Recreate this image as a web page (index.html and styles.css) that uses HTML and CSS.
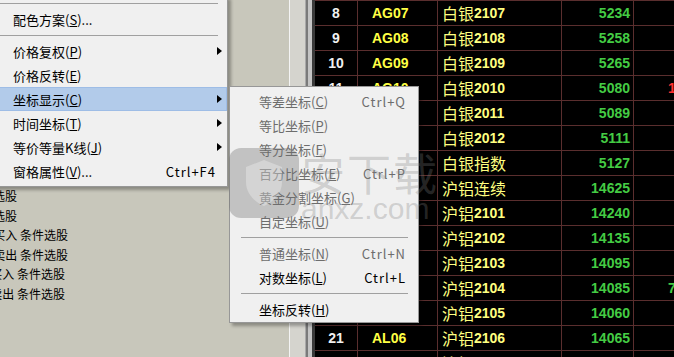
FILE: index.html
```html
<!DOCTYPE html>
<html lang="zh-CN">
<head>
<meta charset="utf-8">
<title>坐标显示</title>
<link rel="stylesheet" href="styles.css">
</head>
<body>
<div class="screen">
  <div class="left-pane">
    <div class="tree">
      <div class="tline w17"><span>指标选股</span></div>
      <div class="tline w17"><span>智能选股</span></div>
      <div class="tline w68"><span>指标买入 条件选股</span></div>
      <div class="tline w68"><span>指标卖出 条件选股</span></div>
      <div class="tline w65"><span>趋势买入 条件选股</span></div>
      <div class="tline w65"><span>趋势卖出 条件选股</span></div>
    </div>
  </div>
  <div class="vbar"></div>
  <div class="vedge"></div>
  <div class="quote">
    <div class="row"><div class="c num">8</div><div class="c code">AG07</div><div class="c name"><span class="cn">白银</span>2107</div><div class="c price">5234</div><div class="c extra"></div></div>
    <div class="row"><div class="c num">9</div><div class="c code">AG08</div><div class="c name"><span class="cn">白银</span>2108</div><div class="c price">5258</div><div class="c extra"></div></div>
    <div class="row"><div class="c num">10</div><div class="c code">AG09</div><div class="c name"><span class="cn">白银</span>2109</div><div class="c price">5265</div><div class="c extra"></div></div>
    <div class="row"><div class="c num">11</div><div class="c code">AG10</div><div class="c name"><span class="cn">白银</span>2010</div><div class="c price">5080</div><div class="c extra up">15</div></div>
    <div class="row"><div class="c num"></div><div class="c code"></div><div class="c name"><span class="cn">白银</span>2011</div><div class="c price">5089</div><div class="c extra"></div></div>
    <div class="row"><div class="c num"></div><div class="c code"></div><div class="c name"><span class="cn">白银</span>2012</div><div class="c price">5111</div><div class="c extra"></div></div>
    <div class="row"><div class="c num"></div><div class="c code"></div><div class="c name"><span class="cn">白银指数</span></div><div class="c price">5127</div><div class="c extra"></div></div>
    <div class="row"><div class="c num"></div><div class="c code"></div><div class="c name"><span class="cn">沪铝连续</span></div><div class="c price">14625</div><div class="c extra"></div></div>
    <div class="row"><div class="c num"></div><div class="c code"></div><div class="c name"><span class="cn">沪铝</span>2101</div><div class="c price">14240</div><div class="c extra"></div></div>
    <div class="row"><div class="c num"></div><div class="c code"></div><div class="c name"><span class="cn">沪铝</span>2102</div><div class="c price">14135</div><div class="c extra"></div></div>
    <div class="row"><div class="c num"></div><div class="c code"></div><div class="c name"><span class="cn">沪铝</span>2103</div><div class="c price">14095</div><div class="c extra"></div></div>
    <div class="row"><div class="c num"></div><div class="c code"></div><div class="c name"><span class="cn">沪铝</span>2104</div><div class="c price">14085</div><div class="c extra dn">7</div></div>
    <div class="row"><div class="c num"></div><div class="c code"></div><div class="c name"><span class="cn">沪铝</span>2105</div><div class="c price">14060</div><div class="c extra"></div></div>
    <div class="row"><div class="c num">21</div><div class="c code">AL06</div><div class="c name"><span class="cn">沪铝</span>2106</div><div class="c price">14065</div><div class="c extra"></div></div>
    <div class="row"><div class="c num">22</div><div class="c code">AL07</div><div class="c name"><span class="cn">沪铝</span>2107</div><div class="c price">14070</div><div class="c extra"></div></div>
  </div>

  <div class="menu main-menu">
    <div class="sep"></div>
    <div class="item"><span class="label">配色方案(<u>S</u>)...</span></div>
    <div class="sep"></div>
    <div class="item"><span class="label">价格复权(<u>P</u>)</span><span class="arrow"></span></div>
    <div class="item"><span class="label">价格反转(<u>E</u>)</span></div>
    <div class="item active"><span class="label">坐标显示(<u>C</u>)</span><span class="arrow"></span></div>
    <div class="item"><span class="label">时间坐标(<u>T</u>)</span><span class="arrow"></span></div>
    <div class="item"><span class="label">等价等量K线(<u>J</u>)</span><span class="arrow"></span></div>
    <div class="item"><span class="label">窗格属性(<u>V</u>)...</span><span class="key">Ctrl+F4</span></div>
  </div>

  <div class="menu sub-menu">
    <div class="item dis"><span class="label">等差坐标(<u>C</u>)</span><span class="key">Ctrl+Q</span></div>
    <div class="item dis"><span class="label">等比坐标(<u>P</u>)</span></div>
    <div class="item dis"><span class="label">等分坐标(<u>F</u>)</span></div>
    <div class="item dis"><span class="label">百分比坐标(<u>E</u>)</span><span class="key">Ctrl+P</span></div>
    <div class="item dis"><span class="label">黄金分割坐标(<u>G</u>)</span></div>
    <div class="item dis"><span class="label">自定坐标(<u>U</u>)</span></div>
    <div class="sep"></div>
    <div class="item dis"><span class="label">普通坐标(<u>N</u>)</span><span class="key">Ctrl+N</span></div>
    <div class="item"><span class="label">对数坐标(<u>L</u>)</span><span class="key">Ctrl+L</span></div>
    <div class="sep"></div>
    <div class="item"><span class="label">坐标反转(<u>H</u>)</span></div>
  </div>

  <div class="watermark">
    <div class="wm-logo">
      <svg width="44" height="50" viewBox="0 0 44 50"><path d="M22 2 L40 9 V24 C40 36 31 44 22 48 C13 44 4 36 4 24 V9 Z" fill="rgba(255,255,255,0.3)"/></svg>
    </div>
    <div class="wm-text">
      <div class="wm-cn">安下载</div>
      <div class="wm-en">anxz.com</div>
    </div>
  </div>
</div>
</body>
</html>
```

FILE: styles.css
```css
* { box-sizing: border-box; }
html, body { margin: 0; padding: 0; }
body {
  width: 674px;
  height: 357px;
  overflow: hidden;
  background: #000;
  font-family: "Noto Sans CJK SC", sans-serif;
}
.screen {
  position: relative;
  width: 674px;
  height: 357px;
  display: flex;
  overflow: hidden;
}

/* left panel */
.left-pane {
  width: 289px;
  flex: none;
  background: #c8c7bb;
  padding-top: 186px;
  font-size: 12px;
  color: #000;
}
.tline {
  height: 19.6px;
  line-height: 19.6px;
  display: flex;
  justify-content: flex-end;
  overflow: hidden;
  white-space: nowrap;
}
.w17 { width: 17px; }
.w68 { width: 68px; }
.w65 { width: 65px; }

.vbar {
  width: 16px;
  flex: none;
  background: #d5d4ce;
  border-left: 1px solid #f4f4f4;
}
.vedge {
  width: 10px;
  flex: none;
  background: linear-gradient(to right, #a9a9a9 0 1px, #7a7a7a 1px 3px, #c4c4c4 3px 7px, #3a3a3a 7px 10px);
}

/* quote table */
.quote {
  flex: 1;
  background: #000;
  border-top: 1px solid #5a2e2e;
}
.row {
  display: grid;
  grid-template-columns: 43px 80px 124px 72px 1fr;
  height: 25px;
  border-bottom: 1px solid #5a2e2e;
}
.c {
  border-right: 1px solid #5a2e2e;
  display: flex;
  align-items: center;
  font-family: "Liberation Sans", sans-serif;
  font-weight: bold;
  font-size: 14px;
  white-space: nowrap;
  overflow: hidden;
}
.num { justify-content: center; color: #f0f0f0; }
.code { padding-left: 14px; color: #ffff44; }
.name { padding-left: 4px; color: #ffff80; }
.name .cn {
  font-family: "Noto Sans CJK SC", sans-serif;
  font-weight: normal;
  font-size: 16px;
}
.price { justify-content: flex-end; padding-right: 3px; color: #44cc44; }
.extra { border-right: none; padding-left: 34px; }
.up { color: #ff3030; }
.dn { color: #44cc44; }

/* menus */
.menu {
  position: absolute;
  background: #f0f0f0;
  border: 1px solid #979797;
  box-shadow: 3px 3px 3px rgba(0, 0, 0, 0.3);
  font-size: 13px;
  color: #000;
}
.main-menu {
  left: -30px;
  top: -4px;
  width: 258px;
  padding: 2px 0 3px;
}
.item {
  height: 24px;
  display: flex;
  align-items: center;
}
.main-menu .item { padding-left: 42px; padding-right: 5px; }
.label { flex: 1; white-space: nowrap; }
.key { white-space: nowrap; letter-spacing: 1px; }
.main-menu .key { margin-right: 6px; }
.arrow {
  width: 0;
  height: 0;
  border-left: 5px solid #000;
  border-top: 4px solid transparent;
  border-bottom: 4px solid transparent;
}
.sep { height: 1px; background: #a0a0a0; margin: 4px 0 3px; }
.main-menu .sep { margin-right: 9px; }
.active { background: #b2cbea; box-shadow: inset 0 0 0 1px #9ebde6; }

.sub-menu {
  left: 229px;
  top: 86px;
  width: 190px;
  padding: 2px 0 1px;
}
.sub-menu .item { padding-left: 29px; padding-right: 12px; }
.sub-menu .sep { margin-left: 11px; margin-right: 10px; }
.dis { color: #6d6d6d; }

/* watermark */
.watermark {
  position: absolute;
  left: 229px;
  top: 148px;
  display: flex;
  gap: 2px;
  pointer-events: none;
}
.wm-logo {
  width: 70px;
  height: 70px;
  border-radius: 12px;
  background: rgba(110, 110, 110, 0.35);
  display: flex;
  align-items: center;
  justify-content: center;
}
.wm-text { color: rgba(128, 128, 128, 0.3); }
.wm-cn { font-size: 44px; line-height: 48px; letter-spacing: 2px; }
.wm-en { font-size: 30px; line-height: 26px; font-family: "Liberation Sans", sans-serif; }
```
